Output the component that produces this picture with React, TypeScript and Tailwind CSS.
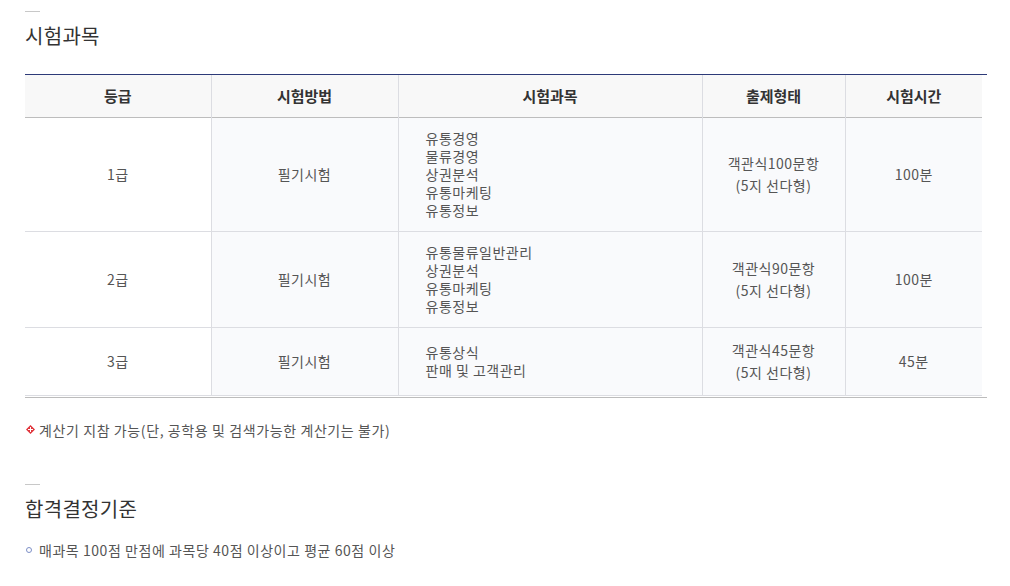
const rows = [
  {
    grade: "1급",
    method: "필기시험",
    subjects: ["유통경영", "물류경영", "상권분석", "유통마케팅", "유통정보"],
    form: "객관식100문항",
    time: "100분",
    h: "h-[114px]",
  },
  {
    grade: "2급",
    method: "필기시험",
    subjects: ["유통물류일반관리", "상권분석", "유통마케팅", "유통정보"],
    form: "객관식90문항",
    time: "100분",
    h: "h-[96px]",
  },
  {
    grade: "3급",
    method: "필기시험",
    subjects: ["유통상식", "판매 및 고객관리"],
    form: "객관식45문항",
    time: "45분",
    h: "h-[68px]",
  },
];

const SectionTitle = ({ children }: { children: string }) => (
  <div>
    <div className="w-[15px] h-px bg-[#c8c8c8]" />
    <h2 className="mt-[12px] text-[20px] leading-[24px] text-[#333] font-normal tracking-[0.3px]">{children}</h2>
  </div>
);

export default function App() {
  return (
    <div
      className="w-[1010px] h-[586px] bg-white pl-[25px] pt-[11px] text-[#555]"
      style={{ fontFamily: '"Noto Sans CJK KR", "Noto Sans", sans-serif' }}
    >
      <SectionTitle>시험과목</SectionTitle>

      <div className="mt-[26px] w-[962px] border-t border-[#2d3a78] border-b border-b-[#bcbcbc] pb-px">
        <table className="w-[957px] border-collapse text-[14px] tracking-[0.5px] table-fixed">
          <colgroup>
            <col className="w-[186px]" />
            <col className="w-[187px]" />
            <col className="w-[304px]" />
            <col className="w-[143px]" />
            <col className="w-[137px]" />
          </colgroup>
          <thead>
            <tr className="h-[42px] bg-[#f8f8f8] border-b border-[#bdbdbd] text-[15px] tracking-normal text-[#333]">
              <th className="font-bold">등급</th>
              <th className="font-bold border-l border-[#dcdde2]">시험방법</th>
              <th className="font-bold border-l border-[#dcdde2]">시험과목</th>
              <th className="font-bold border-l border-[#dcdde2]">출제형태</th>
              <th className="font-bold border-l border-[#dcdde2]">시험시간</th>
            </tr>
          </thead>
          <tbody>
            {rows.map((r) => (
              <tr key={r.grade} className={`${r.h} border-b border-[#dcdde2]`}>
                <td className="bg-white text-center align-middle">{r.grade}</td>
                <td className="bg-[#f9fafc] border-l border-[#dcdde2] text-center align-middle">{r.method}</td>
                <td className="bg-[#f9fafc] border-l border-[#dcdde2] pl-[27px] align-middle leading-[18px]">
                  {r.subjects.map((s) => (
                    <div key={s}>{s}</div>
                  ))}
                </td>
                <td className="bg-[#f9fafc] border-l border-[#dcdde2] text-center align-middle leading-[22px]">
                  <div>{r.form}</div>
                  <div>(5지 선다형)</div>
                </td>
                <td className="bg-[#f9fafc] border-l border-[#dcdde2] text-center align-middle">{r.time}</td>
              </tr>
            ))}
          </tbody>
        </table>
      </div>

      <p className="mt-[22px] flex items-center text-[14px] leading-[20px] tracking-[0.6px] text-[#555]">
        <span className="mr-[4px] ml-[1px] w-[9px] h-[9px] flex items-center justify-center">
          <svg width="9" height="9" viewBox="0 0 9 9">
            <path d="M4.5 0 L9 4.5 L4.5 9 L0 4.5 Z" fill="#e0353c" />
            <rect x="4" y="2" width="1" height="5" fill="#fff" />
            <rect x="2" y="4" width="5" height="1" fill="#fff" />
          </svg>
        </span>
        계산기 지참 가능(단, 공학용 및 검색가능한 계산기는 불가)
      </p>

      <div className="mt-[44px]">
        <SectionTitle>합격결정기준</SectionTitle>
      </div>

      <p className="mt-[19px] flex items-center text-[14px] leading-[20px] tracking-[0.55px] text-[#555]">
        <span className="ml-[1px] mr-[7px] w-[6px] h-[6px] rounded-full border border-[#7d8fc6]" />
        매과목 100점 만점에 과목당 40점 이상이고 평균 60점 이상
      </p>
    </div>
  );
}
